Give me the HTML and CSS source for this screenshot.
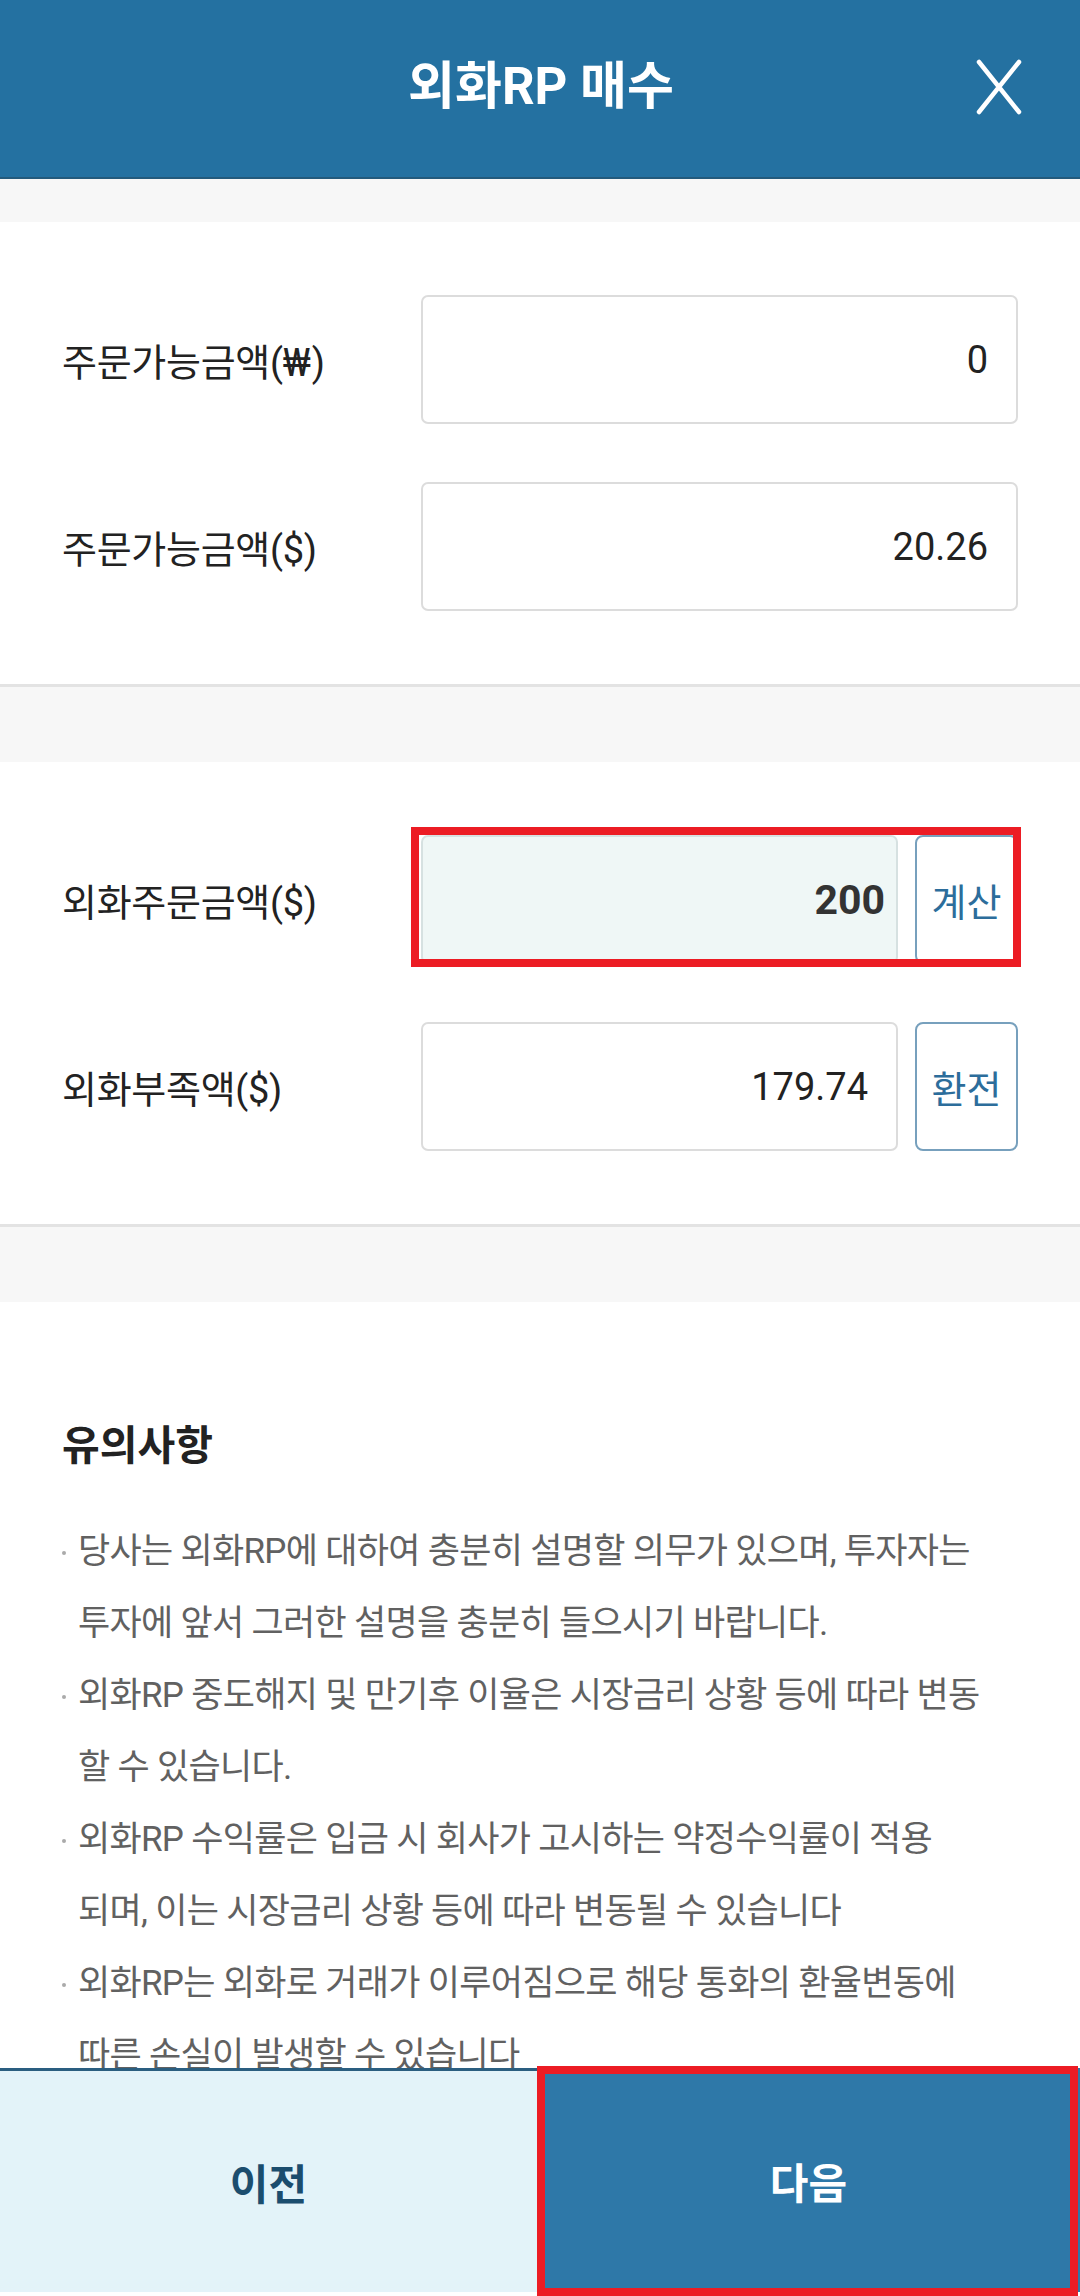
FILE: index.html
```html
<!DOCTYPE html>
<html lang="ko">
<head>
<meta charset="utf-8">
<title>외화RP 매수</title>
<link rel="stylesheet" href="styles.css">
</head>
<body>
<div class="page">
  <header class="topbar">
    <span></span>
    <h1 class="title">외화RP 매수</h1>
    <button class="close" aria-label="닫기">
      <svg width="46" height="56" viewBox="0 0 46 56"><path d="M3 3 L43 53 M43 3 L3 53" stroke="#fff" stroke-width="4.5" stroke-linecap="round" fill="none"/></svg>
    </button>
  </header>

  <div class="band band-top"></div>

  <section class="panel">
    <div class="row">
      <div class="label">주문가능금액(<span class="won">₩</span>)</div>
      <div class="field"><div class="input">0</div></div>
    </div>
    <div class="row">
      <div class="label">주문가능금액($)</div>
      <div class="field"><div class="input">20.26</div></div>
    </div>
  </section>

  <div class="band"></div>

  <section class="panel">
    <div class="row">
      <div class="label">외화주문금액($)</div>
      <div class="field marked">
        <div class="input focus">200</div>
        <button class="act">계산</button>
        <span class="mark mark-field"></span>
      </div>
    </div>
    <div class="row">
      <div class="label">외화부족액($)</div>
      <div class="field">
        <div class="input">179.74</div>
        <button class="act">환전</button>
      </div>
    </div>
  </section>

  <div class="band"></div>

  <section class="notice">
    <h2 class="notice-title">유의사항</h2>
    <ul class="notes">
      <li>당사는 외화RP에 대하여 충분히 설명할 의무가 있으며, 투자자는<br>투자에 앞서 그러한 설명을 충분히 들으시기 바랍니다.</li>
      <li>외화RP 중도해지 및 만기후 이율은 시장금리 상황 등에 따라 변동<br>할 수 있습니다.</li>
      <li>외화RP 수익률은 입금 시 회사가 고시하는 약정수익률이 적용<br>되며, 이는 시장금리 상황 등에 따라 변동될 수 있습니다</li>
      <li>외화RP는 외화로 거래가 이루어짐으로 해당 통화의 환율변동에<br>따른 손실이 발생할 수 있습니다</li>
    </ul>
  </section>

  <nav class="bottombar">
    <button class="nav-btn prev">이전</button>
    <button class="nav-btn next">다음<span class="mark mark-next"></span></button>
  </nav>
</div>
</body>
</html>
```

FILE: styles.css
```css
* { box-sizing: border-box; }
html, body { margin: 0; padding: 0; }
body {
  width: 1080px;
  height: 2296px;
  overflow: hidden;
  background: #fff;
  font-family: Roboto, "Noto Sans CJK KR", "Noto Sans", sans-serif;
  color: #222;
}
.page { width: 1080px; height: 2296px; position: relative; overflow: hidden; }

.topbar {
  height: 179px;
  background: #2471a1;
  border-bottom: 2px solid #235a7c;
  display: grid;
  grid-template-columns: 1fr auto 1fr;
  align-items: center;
  padding: 0 58px 4px 60px;
}
.title {
  margin: 0;
  color: #fff;
  font-size: 51px;
  font-weight: 700;
  line-height: 1;
  letter-spacing: 0;
}
.close {
  justify-self: end;
  background: none;
  border: 0;
  padding: 0;
  width: 46px;
  height: 56px;
  display: flex;
}

.band { height: 75px; background: #f7f7f7; }
.band-top { height: 43px; }

.panel {
  padding: 73px 62px 73px 62px;
  display: flex;
  flex-direction: column;
  gap: 58px;
  border-bottom: 3px solid #e3e3e3;
}
.row {
  display: flex;
  align-items: center;
  height: 129px;
}
.label {
  width: 359px;
  font-size: 38px;
  color: #222;
  letter-spacing: -0.3px;
}
.won { font-weight: 400; letter-spacing: 1px; }
.field {
  flex: 1;
  height: 100%;
  display: flex;
  gap: 17px;
  position: relative;
}
.input {
  flex: 1;
  border: 2px solid #dcdcdc;
  border-radius: 7px;
  background: #fff;
  display: flex;
  align-items: center;
  justify-content: flex-end;
  padding-right: 28px;
  font-size: 38px;
  color: #222;
}
.input.focus {
  background: #eff7f6;
  border-color: #d6e1e1;
  font-weight: 700;
  font-size: 41px;
  color: #333;
  padding-right: 11px;
}
.act {
  width: 103px;
  flex: none;
  border: 2px solid #77a0bd;
  border-radius: 8px;
  background: #fff;
  color: #2c6d9b;
  font-family: Roboto, "Noto Sans CJK KR", sans-serif;
  font-size: 38px;
  padding: 0;
}

.mark {
  position: absolute;
  border: 8px solid #ec1c24;
  pointer-events: none;
}
.mark-field { top: -8px; bottom: -3px; left: -10px; right: -3px; }

.notice { padding: 118px 62px 0 62px; }
.notice-title {
  margin: 0 0 44px 0;
  font-size: 41px;
  font-weight: 700;
  line-height: 52px;
  color: #222;
}
.notes {
  list-style: none;
  margin: 0;
  padding: 0;
}
.notes li {
  display: grid;
  grid-template-columns: 16px 1fr;
  font-size: 35px;
  line-height: 72px;
  letter-spacing: -0.7px;
  color: #616161;
  white-space: nowrap;
}
.notes li::before {
  content: "";
  width: 4px;
  height: 4px;
  border-radius: 50%;
  background: #aaa;
  margin-top: 35px;
}

.bottombar {
  position: absolute;
  left: 0;
  right: 0;
  bottom: 4px;
  height: 224px;
  display: grid;
  grid-template-columns: 537px 1fr;
}
.nav-btn {
  border: 0;
  padding: 0;
  font-family: Roboto, "Noto Sans CJK KR", sans-serif;
  font-size: 42px;
  font-weight: 700;
  position: relative;
}
.prev {
  background: #e3f3f9;
  color: #1b4d6e;
  border-top: 3px solid #2a5e80;
}
.next {
  background: #2e78a8;
  color: #fff;
}
.mark-next { top: -2px; bottom: -4px; left: 0; right: 2px; }
```
